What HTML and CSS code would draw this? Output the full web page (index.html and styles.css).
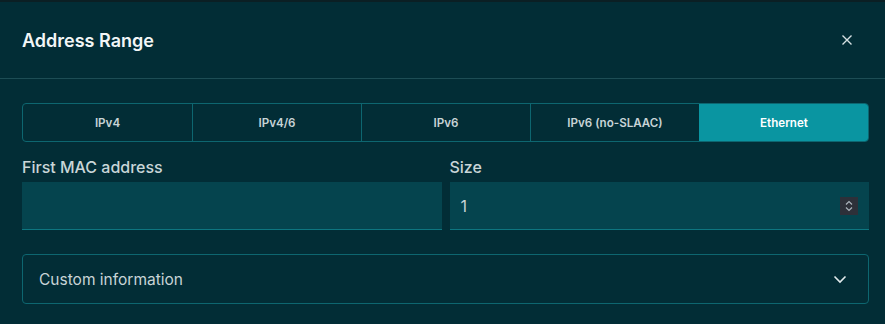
FILE: index.html
```html
<!DOCTYPE html>
<html>
<head>
<meta charset="utf-8">
<link rel="stylesheet" href="styles.css">
</head>
<body>
<div class="topline"></div>
<div class="modal">
  <div class="header">
    <h1 class="title">Address Range</h1>
    <button class="close" aria-label="Close">
      <svg width="12" height="12" viewBox="0 0 12 12"><path d="M1.5 1.5 L10.5 10.5 M10.5 1.5 L1.5 10.5" stroke="#d6e0e2" stroke-width="1.4" fill="none"/></svg>
    </button>
  </div>
  <div class="body">
    <div class="tabs">
      <div class="tab">IPv4</div>
      <div class="tab">IPv4/6</div>
      <div class="tab">IPv6</div>
      <div class="tab">IPv6 (no-SLAAC)</div>
      <div class="tab active">Ethernet</div>
    </div>
    <div class="fields">
      <div class="field">
        <label class="label">First MAC address</label>
        <div class="input"></div>
      </div>
      <div class="field">
        <label class="label">Size</label>
        <div class="input">
          <span class="value">1</span>
          <span class="spin">
            <svg width="18" height="18" viewBox="0 0 18 18"><path d="M6 7.5 L9 4.5 L12 7.5 M6 10.5 L9 13.5 L12 10.5" stroke="#aab3bb" stroke-width="1.2" fill="none"/></svg>
          </span>
        </div>
      </div>
    </div>
    <div class="accordion">
      <span class="acc-text">Custom information</span>
      <svg width="14" height="14" viewBox="0 0 14 14"><path d="M1.5 4.5 L7 10 L12.5 4.5" stroke="#e2eaec" stroke-width="1.6" fill="none"/></svg>
    </div>
  </div>
</div>
</body>
</html>
```
FILE: styles.css
```css
* { box-sizing: border-box; }
html, body { margin: 0; padding: 0; }
body {
  background: #022d36;
  font-family: Inter, "Noto Sans", sans-serif;
  color: #e6eef0;
  width: 885px;
  height: 324px;
  overflow: hidden;
}
.topline { height: 2px; background: #0b1f24; }
.modal { display: flex; flex-direction: column; }
.header {
  height: 77px;
  display: flex;
  align-items: center;
  justify-content: space-between;
  padding: 0 30px 0 22px;
  border-bottom: 1px solid #1d4d55;
}
.title {
  margin: 0;
  font-size: 18px;
  font-weight: 600;
  color: #f2f6f7;
  letter-spacing: 0;
}
.close {
  background: none;
  border: none;
  padding: 0;
  width: 16px;
  height: 16px;
  display: flex;
  align-items: center;
  justify-content: center;
}
.body { padding: 24px 16px 0 22px; }
.tabs {
  display: grid;
  grid-template-columns: repeat(5, 1fr);
  height: 39px;
  border: 1px solid #0d6670;
  border-radius: 4px;
  overflow: hidden;
}
.tab {
  display: flex;
  align-items: center;
  justify-content: center;
  font-size: 11.6px;
  font-weight: 600;
  color: #c8d4d6;
  border-left: 1px solid #0d6670;
}
.tab:first-child { border-left: none; }
.tab.active { background: #0a95a1; color: #ffffff; border-left-color: #0a95a1; }
.fields {
  display: grid;
  grid-template-columns: 1fr 1fr;
  gap: 8px;
  margin-top: 14px;
}
.field { display: flex; flex-direction: column; }
.label {
  font-size: 16px;
  font-weight: 500;
  color: #c9d6d8;
  height: 26px;
  line-height: 22px;
}
.input {
  height: 48px;
  background: #05444e;
  border-bottom: 1px solid #0e7680;
  display: flex;
  align-items: center;
  justify-content: space-between;
  padding: 0 11px 0 11px;
}
.value { font-size: 16px; color: #c8d4d6; }
.spin {
  width: 18px;
  height: 18px;
  background: #2d3039;
  display: flex;
}
.accordion {
  margin-top: 24px;
  height: 50px;
  border: 1px solid #0d6670;
  border-radius: 4px;
  display: flex;
  align-items: center;
  justify-content: space-between;
  padding: 0 21px 0 16px;
}
.acc-text { font-size: 15.5px; color: #c8d4d6; }
```
